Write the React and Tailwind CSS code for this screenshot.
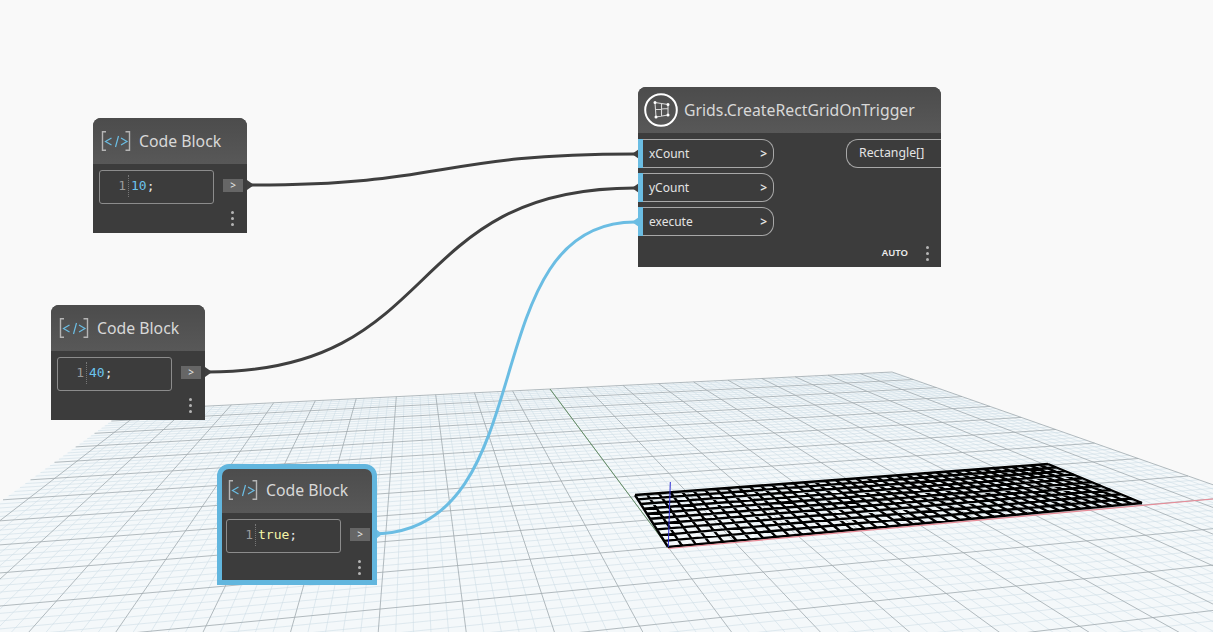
import React from 'react';

// unit square -> screen quad
function makeProjection(p0, p1, p2, p3) {
  const dx1 = p1[0] - p2[0], dx2 = p3[0] - p2[0], sx = p0[0] - p1[0] + p2[0] - p3[0];
  const dy1 = p1[1] - p2[1], dy2 = p3[1] - p2[1], sy = p0[1] - p1[1] + p2[1] - p3[1];
  const det = dx1 * dy2 - dx2 * dy1;
  const g = (sx * dy2 - dx2 * sy) / det;
  const h = (dx1 * sy - sx * dy1) / det;
  const a = p1[0] - p0[0] + g * p1[0], b = p3[0] - p0[0] + h * p3[0];
  const d = p1[1] - p0[1] + g * p1[1], e = p3[1] - p0[1] + h * p3[1];
  return (u, v) => {
    const w = g * u + h * v + 1;
    return [(a * u + b * v + p0[0]) / w, (d * u + e * v + p0[1]) / w];
  };
}

const seg = (A, B) => `M${A[0].toFixed(1)} ${A[1].toFixed(1)}L${B[0].toFixed(1)} ${B[1].toFixed(1)}`;

// ground plane, 1 unit = 1 minor cell, origin at the axes crossing
const planeMap = makeProjection([668, 547], [1245, 496], [892, 372], [550, 389]);
const plane = (x, y) => planeMap(x / 50, y / 50);
const LEFT = -52;
const NEAR = -20; // well below the bottom of the window

function gridPaths(step, skip) {
  let out = '';
  for (let i = -50; i <= 50; i += step) {
    if (skip && i % skip === 0) continue;
    out += seg(plane(i, NEAR), plane(i, 50));
  }
  for (let j = NEAR; j <= 50; j += step) {
    if (skip && j % skip === 0) continue;
    out += seg(plane(LEFT, j), plane(50, j));
  }
  return out;
}

// the 40 x 10 rectangles
const modelMap = makeProjection([668, 547], [1142, 503], [1048, 464], [635, 495]);
function modelGrid() {
  let out = '';
  for (let i = 0; i <= 40; i++) out += seg(modelMap(i / 40, 0), modelMap(i / 40, 1));
  for (let j = 0; j <= 10; j++) out += seg(modelMap(0, j / 10), modelMap(1, j / 10));
  return out;
}

const planeFill = [plane(LEFT, 50), plane(50, 50), plane(50, NEAR), plane(LEFT, NEAR)]
  .map((pt) => pt.map((n) => n.toFixed(1)).join(','))
  .join(' ');

function Scene() {
  return (
    <svg className="absolute inset-0" width="1213" height="632" viewBox="0 0 1213 632">
      <polygon points={planeFill} fill="#f4f8fa" />
      <path d={gridPaths(1, 5)} fill="none" stroke="#cfdde5" strokeWidth="0.6" />
      <path d={gridPaths(5)} fill="none" stroke="#a0aaae" strokeWidth="0.8" />
      <path d="M668 547L550 389" stroke="#5c8a5c" strokeWidth="0.9" />
      <path d={modelGrid()} fill="none" stroke="#000" strokeWidth="2.4" />
      <path d="M668 548.5L1213 499" stroke="#e88c98" strokeWidth="1.2" />
      <path d="M670.3 482L668.3 547" stroke="#2a2ad0" strokeWidth="1" />

      {/* wires */}
      <path d="M250 185C450 185 435 154 635 154" fill="none" stroke="#3f3f3f" strokeWidth="3" />
      <path d="M208 372C445 372 400 188 635 188" fill="none" stroke="#3f3f3f" strokeWidth="3" />
      <path d="M372 534C547 534 470 222 635 222" fill="none" stroke="#6bbde3" strokeWidth="3" />
      <polygon points="639,149 639,159 632,154" fill="#3f3f3f" />
      <polygon points="639,183 639,193 632,188" fill="#3f3f3f" />
      <polygon points="639,217 639,227 632,222" fill="#6bbde3" />
      <polygon points="247,180 247,190 254,185" fill="#3f3f3f" />
      <polygon points="205,367 205,377 212,372" fill="#3f3f3f" />
      <polygon points="376,529 376,539 382,534" fill="#6bbde3" />
    </svg>
  );
}

function CodeIcon() {
  return (
    <svg width="32" height="20" viewBox="0 0 32 20" fill="none">
      <path d="M6 .7H2.5V19.3H6M25.5 .7H29.5V19.3H25.5" stroke="#b5b5b5" strokeWidth="1.4" />
      <path d="M11.5 7L5.5 10.5L11.5 14M15.5 16L18.5 5M21 7L27 10.5L21 14" stroke="#6bbde3" strokeWidth="1.2" />
    </svg>
  );
}

function GridIcon() {
  return (
    <svg width="34" height="34" viewBox="0 0 34 34" fill="none">
      <circle cx="17" cy="17" r="15.8" stroke="#fff" strokeWidth="2" />
      <path d="M11 9.5L24 11.5V22L12 24ZM11.5 16.5L24 15.5M17.5 10.5V23" stroke="#d8d8d8" strokeWidth="1.1" strokeLinejoin="round" />
      <path d="M11 9.5h.01M24 11.5h.01M24 22h.01M12 24h.01" stroke="#fff" strokeWidth="3" strokeLinecap="round" />
    </svg>
  );
}

function Dots() {
  return (
    <div className="flex flex-col gap-[3px]">
      <span className="w-[3px] h-[3px] bg-[#b5b5b5] rounded-full" />
      <span className="w-[3px] h-[3px] bg-[#b5b5b5] rounded-full" />
      <span className="w-[3px] h-[3px] bg-[#b5b5b5] rounded-full" />
    </div>
  );
}

function CodeBlock({ className, value, valueClass, selected }) {
  return (
    <div className={`absolute w-[154px] h-[115px] flex flex-col bg-[#3c3c3c] rounded-t-lg ${className}`}>
      <div className="h-[46px] flex items-center gap-[7px] pl-[7px] rounded-t-lg bg-gradient-to-b from-[#4c4c4c] to-[#585858]">
        <CodeIcon />
        <span className="pt-[2px] text-[15.8px] text-[#d8d8d8] font-['Noto_Sans',sans-serif]">Code Block</span>
      </div>
      <div className="flex items-start mt-[6px] pl-[6px]">
        <div className="w-[115px] h-[34px] flex items-center pb-[2px] border border-[#8c8c8c] rounded-[3px] font-['DejaVu_Sans_Mono',monospace] text-[13px]">
          <span className="w-[26px] text-right text-[#9a9a9a]">1</span>
          <span className="h-[22px] ml-[2px] mr-[2px] border-l border-dotted border-[#777]" />
          <span className={valueClass}>{value}</span>
          <span className="text-[#e6e6e6]">;</span>
        </div>
        <div className="ml-[9px] mt-[9px] w-[20px] h-[13px] flex items-center justify-center bg-[#666] text-[#e8e8e8] text-[10px] font-['Noto_Sans',sans-serif]">
          &gt;
        </div>
      </div>
      <div className="flex justify-end pr-[13px] mt-[7px]">
        <Dots />
      </div>
      {selected && <div className="absolute -left-[3px] -right-[3px] -top-[3px] -bottom-[3px] border-[5px] border-[#62b6de] rounded-t-xl" />}
    </div>
  );
}

function InputPort({ label }) {
  return (
    <div className="flex h-[29px]">
      <span className="w-[5px] bg-[#6bbde3]" />
      <div className="w-[131px] flex items-center justify-between pl-[6px] pr-[6px] border border-l-0 border-[#a8a8a8] rounded-r-[12px] text-[12px] text-[#e4e4e4]">
        <span>{label}</span>
        <span className="font-semibold">&gt;</span>
      </div>
    </div>
  );
}

function GridsNode() {
  return (
    <div className="absolute left-[638px] top-[87px] w-[303px] h-[180px] flex flex-col bg-[#3c3c3c] rounded-t-lg font-['Noto_Sans',sans-serif]">
      <div className="h-[46px] flex items-center gap-[6px] pl-[6px] rounded-t-lg bg-gradient-to-b from-[#4c4c4c] to-[#585858]">
        <GridIcon />
        <span className="pt-[2px] text-[15.8px] text-[#d8d8d8]">Grids.CreateRectGridOnTrigger</span>
      </div>
      <div className="flex justify-between pt-[6px]">
        <div className="flex flex-col gap-[5px]">
          <InputPort label="xCount" />
          <InputPort label="yCount" />
          <InputPort label="execute" />
        </div>
        <div className="w-[95px] h-[29px] flex items-center pl-[12px] border border-r-0 border-[#a8a8a8] rounded-l-[12px] text-[12.3px] text-[#e4e4e4]">
          Rectangle[]
        </div>
      </div>
      <div className="flex items-center justify-end gap-[18px] pr-[12px] mt-[10px]">
        <span className="text-[9.5px] font-semibold text-[#eee]">AUTO</span>
        <Dots />
      </div>
    </div>
  );
}

export default function App() {
  return (
    <div className="relative w-[1213px] h-[632px] overflow-hidden bg-[#f9f9f9]">
      <Scene />
      <CodeBlock className="left-[93px] top-[118px]" value="10" valueClass="text-[#6bc3ec]" />
      <CodeBlock className="left-[51px] top-[305px]" value="40" valueClass="text-[#6bc3ec]" />
      <CodeBlock className="left-[220px] top-[467px]" value="true" valueClass="text-[#f4f6a8]" selected />
      <GridsNode />
    </div>
  );
}
